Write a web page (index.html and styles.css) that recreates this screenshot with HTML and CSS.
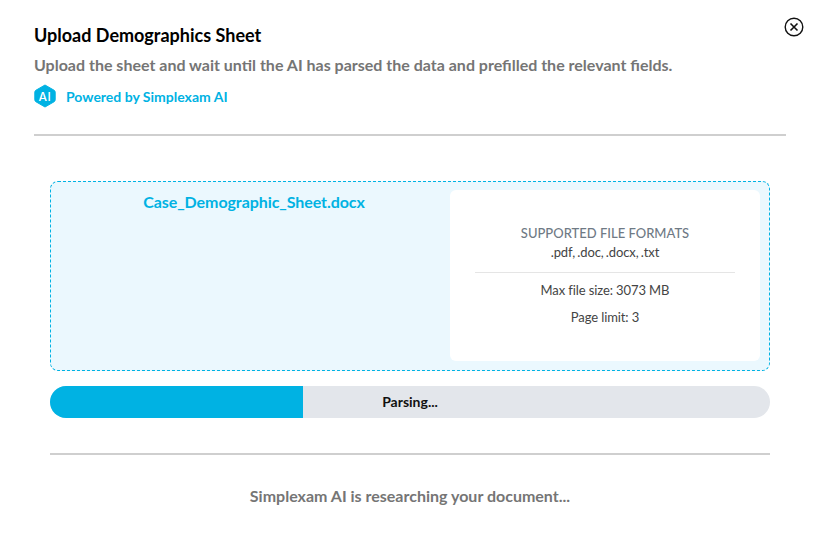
FILE: index.html
```html
<!DOCTYPE html>
<html lang="en">
<head>
  <meta charset="UTF-8">
  <meta name="viewport" content="width=device-width, initial-scale=1.0">
  <title>Upload Demographics Sheet</title>
  <link rel="stylesheet" href="styles.css">
</head>
<body>
  <div class="modal">
    <button class="close-btn" aria-label="Close">
      <svg width="20" height="20" viewBox="0 0 20 20" fill="none" stroke="#111" stroke-width="1.4">
        <circle cx="10" cy="10" r="8.8"/>
        <path d="M6.5 6.5L13.5 13.5M13.5 6.5L6.5 13.5" stroke-width="1.6"/>
      </svg>
    </button>
    <header class="modal-header">
      <h1>Upload Demographics Sheet</h1>
      <p class="subtitle">Upload the sheet and wait until the AI has parsed the data and prefilled the relevant fields.</p>
      <div class="powered">
        <svg class="ai-badge" width="22" height="24" viewBox="0 0 22 24">
          <path d="M11 1L20 6.2Q21.2 6.9 21.2 8.2V15.8Q21.2 17.1 20 17.8L11 23L2 17.8Q0.8 17.1 0.8 15.8V8.2Q0.8 6.9 2 6.2Z" fill="#00b2e3" stroke="#00b2e3" stroke-linejoin="round"/>
          <text x="11" y="16.5" text-anchor="middle" class="ai-text">AI</text>
        </svg>
        <span>Powered by Simplexam AI</span>
      </div>
    </header>
    <div class="modal-body">
      <div class="dropzone">
        <div class="file-side">Case_Demographic_Sheet.docx</div>
        <div class="info-card">
          <div class="formats">
            <div class="formats-title">SUPPORTED FILE FORMATS</div>
            <div class="formats-list">.pdf, .doc, .docx, .txt</div>
          </div>
          <div class="limits">
            <div>Max file size: 3073 MB</div>
            <div>Page limit: 3</div>
          </div>
        </div>
      </div>
      <div class="progress">
        <div class="progress-fill"></div>
        <span class="progress-label">Parsing...</span>
      </div>
      <div class="status">Simplexam AI is researching your document...</div>
    </div>
  </div>
</body>
</html>
```

FILE: styles.css
```css
html, body {
  margin: 0;
  padding: 0;
  background-color: white;
}
body {
  font-family: 'Lato', sans-serif;
  color: #333;
}
.modal {
  position: relative;
  width: 823px;
  height: 549px;
  box-sizing: border-box;
  padding: 24px 37px 0 34px;
  overflow: hidden;
}
.close-btn {
  position: absolute;
  top: 17px;
  right: 19px;
  width: 20px;
  height: 20px;
  padding: 0;
  border: none;
  background: none;
  cursor: pointer;
}
.modal-header {
  height: 110px;
  border-bottom: 2px solid #cfcfcf;
}
h1 {
  margin: 0;
  font-size: 18px;
  line-height: 22px;
  font-weight: 700;
  color: #000;
}
.subtitle {
  margin: 9px 0 0;
  font-size: 16px;
  line-height: 20px;
  font-weight: 700;
  color: #757575;
}
.powered {
  display: flex;
  align-items: center;
  gap: 10px;
  margin-top: 9px;
  font-size: 14px;
  font-weight: 700;
  color: #00b2e3;
}
.ai-badge {
  display: block;
}
.ai-text {
  font-family: 'Inter', sans-serif;
  font-size: 12px;
  font-weight: 500;
  letter-spacing: 0.5px;
  fill: white;
}
.modal-body {
  padding: 45px 16px 0;
}
.dropzone {
  display: flex;
  justify-content: space-between;
  box-sizing: border-box;
  height: 190px;
  padding: 8px 9px 9px 8px;
  background-color: #ebf8fe;
  border: 1px dashed #00b2e3;
  border-radius: 8px;
}
.file-side {
  width: 390px;
  padding-top: 2px;
  text-align: center;
  font-size: 16px;
  line-height: 20px;
  font-weight: 700;
  letter-spacing: -0.07px;
  color: #00b2e3;
}
.info-card {
  box-sizing: border-box;
  width: 310px;
  padding: 34px 25px 0;
  background-color: white;
  border-radius: 6px;
  text-align: center;
  font-size: 13px;
  line-height: 19px;
  color: #444;
}
.formats {
  padding-bottom: 10px;
  border-bottom: 1px solid #e5e5e5;
}
.formats-title {
  font-weight: 500;
  color: #6f7a85;
}
.formats-list {
  letter-spacing: -0.1px;
  word-spacing: -1px;
}
.limits {
  display: flex;
  flex-direction: column;
  gap: 8px;
  padding-top: 8px;
  letter-spacing: -0.1px;
}
.progress {
  position: relative;
  display: flex;
  align-items: center;
  justify-content: center;
  box-sizing: border-box;
  height: 32px;
  margin-top: 15px;
  padding-bottom: 2px;
  background-color: #e3e6eb;
  border-radius: 16px;
  overflow: hidden;
}
.progress-fill {
  position: absolute;
  left: 0;
  top: 0;
  bottom: 0;
  width: 253px;
  background-color: #00b2e3;
}
.progress-label {
  position: relative;
  font-size: 14px;
  font-weight: 700;
  color: #111;
}
.status {
  margin-top: 35px;
  padding-top: 31px;
  border-top: 2px solid #cfcfcf;
  text-align: center;
  font-size: 16px;
  line-height: 20px;
  font-weight: 700;
  color: #757575;
}
```
